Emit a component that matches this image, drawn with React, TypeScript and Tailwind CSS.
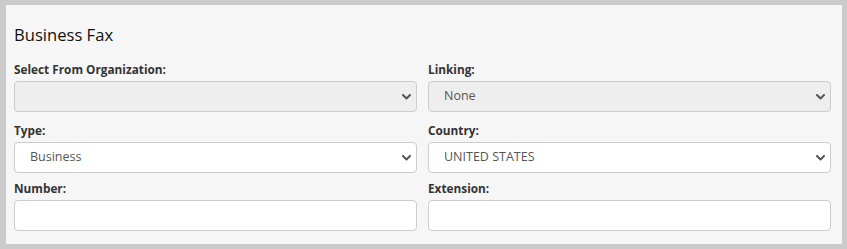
import React from "react";

const font = { fontFamily: '"Open Sans", "Noto Sans", sans-serif' };

function Chevron() {
  return (
    <svg width="9" height="6" viewBox="0 0 9 6" className="shrink-0">
      <path d="M1 1 L4.5 4.5 L8 1" fill="none" stroke="#555" strokeWidth="2" strokeLinecap="round" strokeLinejoin="round" />
    </svg>
  );
}

function Label({ children }: { children: React.ReactNode }) {
  return (
    <div className="h-[17px] leading-[17px] text-[11.8px] font-bold text-[#333] mb-[3px]">{children}</div>
  );
}

function SelectBox({ value, disabled }: { value?: string; disabled?: boolean }) {
  return (
    <div
      className={`h-[31px] border border-[#ccc] rounded-[4px] flex items-center pl-[15px] pr-[5px] ${
        disabled ? "bg-[#eeeeee]" : "bg-white"
      }`}
    >
      <span className="flex-1 text-[12.5px] text-[#555]">{value ?? ""}</span>
      <Chevron />
    </div>
  );
}

function InputBox() {
  return <div className="h-[31px] border border-[#ccc] rounded-[4px] bg-white" />;
}

export default function App() {
  return (
    <div className="w-[847px] h-[249px] bg-[#cbcbcb] pl-[6px] pt-[5px] pr-[5px] pb-[5px]" style={font}>
      <div className="h-[239px] bg-[#f6f6f6] pl-[8px] pr-[11px] pt-[18px]">
        <div className="h-[24px] leading-[24px] text-[16.6px] text-[#111]">Business Fax</div>
        <div className="grid grid-cols-[403px_403px] gap-x-[11px] mt-[14px]">
          <div>
            <Label>Select From Organization:</Label>
            <SelectBox disabled />
          </div>
          <div>
            <Label>Linking:</Label>
            <SelectBox disabled value="None" />
          </div>
          <div className="mt-[10px]">
            <Label>Type:</Label>
            <SelectBox value="Business" />
          </div>
          <div className="mt-[10px]">
            <Label>Country:</Label>
            <SelectBox value="UNITED STATES" />
          </div>
          <div className="mt-[7px]">
            <Label>Number:</Label>
            <InputBox />
          </div>
          <div className="mt-[7px]">
            <Label>Extension:</Label>
            <InputBox />
          </div>
        </div>
      </div>
    </div>
  );
}
